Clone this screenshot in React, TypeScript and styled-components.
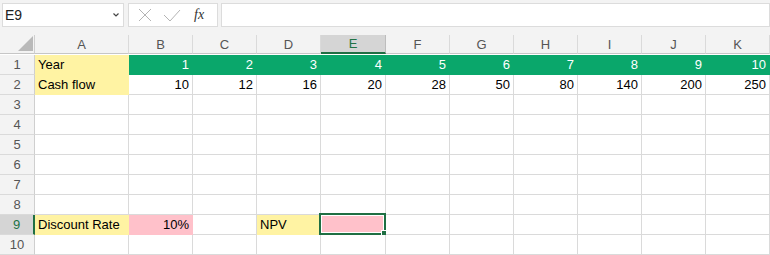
import styled, { createGlobalStyle } from 'styled-components'

const GRID = '#dadada'
const HEAD_BG = '#f3f3f3'
const SEL_GREEN = '#1f6f43'
const GREEN = '#0aa76b'
const YELLOW = '#fff3a3'
const PINK = '#ffc1ca'

const GlobalStyle = createGlobalStyle`
  body {
    margin: 0;
    background: #ffffff;
    font-family: 'Liberation Sans', Arial, sans-serif;
  }
`

const Toolbar = styled.div`
  display: flex;
  align-items: flex-start;
  gap: 3px;
  height: 35px;
  box-sizing: border-box;
  padding: 3px 0 0 2px;
  background: ${HEAD_BG};
`

const Box = styled.div<{ $w?: number }>`
  box-sizing: border-box;
  height: 24px;
  background: #fff;
  border: 1px solid #dcdcdc;
  display: flex;
  align-items: center;
  ${(p) => (p.$w ? `width: ${p.$w}px; flex: none;` : 'flex: 1;')}
`

const NameBox = styled(Box)`
  justify-content: space-between;
  padding: 0 3px 0 2px;
  font-size: 14px;
  color: #222;
`

const FnBox = styled(Box)`
  margin-left: 1px;
  padding-left: 9px;
  gap: 11px;
`

const Fx = styled.span`
  font-family: 'Liberation Serif', serif;
  font-style: italic;
  font-size: 14px;
  color: #333;
  margin-left: 2px;
`

const Sheet = styled.div`
  display: grid;
  grid-template-columns: 35px 94px 64px 64px 64px 65px 64px 64px 64px 64px 64px 64px;
  grid-auto-rows: 20px;
`

const Corner = styled.div`
  position: relative;
  box-sizing: border-box;
  height: 19px;
  background: ${HEAD_BG};
  border-right: 1px solid #cfcfcf;
  border-bottom: 1px solid #c6c6c6;
`

const ColHead = styled.div<{ $sel?: boolean }>`
  box-sizing: border-box;
  height: 19px;
  display: flex;
  align-items: center;
  justify-content: center;
  font-size: 13px;
  background: ${(p) => (p.$sel ? '#d5d5d5' : HEAD_BG)};
  color: ${(p) => (p.$sel ? '#217346' : '#555')};
  border-right: 1px solid ${(p) => (p.$sel ? '#bdbdbd' : GRID)};
  border-bottom: ${(p) => (p.$sel ? `2px solid ${SEL_GREEN}` : '1px solid #c6c6c6')};
`

const RowHead = styled.div<{ $sel?: boolean }>`
  box-sizing: border-box;
  display: flex;
  align-items: center;
  justify-content: center;
  font-size: 13px;
  line-height: 19px;
  background: ${(p) => (p.$sel ? '#d5d5d5' : HEAD_BG)};
  color: ${(p) => (p.$sel ? '#217346' : '#555')};
  border-right: ${(p) => (p.$sel ? `2px solid ${SEL_GREEN}` : '1px solid #cfcfcf')};
  border-bottom: 1px solid ${GRID};
`

const Cell = styled.div<{ $fill?: string; $right?: boolean; $ink?: string }>`
  position: relative;
  box-sizing: border-box;
  padding: 0 3px;
  font-size: 13px;
  line-height: 19px;
  white-space: nowrap;
  text-align: ${(p) => (p.$right ? 'right' : 'left')};
  color: ${(p) => p.$ink ?? '#000'};
  background: ${(p) => p.$fill ?? '#fff'};
  border-right: 1px solid ${(p) => p.$fill ?? GRID};
  border-bottom: 1px solid ${(p) => p.$fill ?? GRID};
`

const Selection = styled.div`
  position: absolute;
  top: -2px;
  left: -2px;
  right: -1px;
  bottom: -1px;
  border: 2px solid ${SEL_GREEN};
  box-shadow: inset 0 0 0 1px #fff;
  pointer-events: none;
`

const Handle = styled.div`
  position: absolute;
  right: -4px;
  bottom: -4px;
  width: 5px;
  height: 5px;
  background: ${SEL_GREEN};
  border: 1px solid #fff;
`

type CellData = { v?: string; fill?: string; right?: boolean; ink?: string; sel?: boolean }

const cols = ['A', 'B', 'C', 'D', 'E', 'F', 'G', 'H', 'I', 'J', 'K']
const years = [1, 2, 3, 4, 5, 6, 7, 8, 9, 10]
const flows = [10, 12, 16, 20, 28, 50, 80, 140, 200, 250]

const empty = (): CellData[] => cols.map(() => ({}))

const rows: CellData[][] = [
  [{ v: 'Year', fill: YELLOW }, ...years.map((y) => ({ v: String(y), fill: GREEN, right: true, ink: '#fff' }))],
  [{ v: 'Cash flow', fill: YELLOW }, ...flows.map((f) => ({ v: String(f), right: true }))],
  empty(),
  empty(),
  empty(),
  empty(),
  empty(),
  empty(),
  [
    { v: 'Discount Rate', fill: YELLOW },
    { v: '10%', fill: PINK, right: true },
    {},
    { v: 'NPV', fill: YELLOW },
    { fill: PINK, sel: true },
    {}, {}, {}, {}, {}, {},
  ],
  empty(),
]

export default function App() {
  return (
    <>
      <GlobalStyle />
      <Toolbar>
        <NameBox $w={122}>
          <span>E9</span>
          <svg width="8" height="6" viewBox="0 0 8 6">
            <polyline points="1.5,1.5 4,4 6.5,1.5" fill="none" stroke="#444" strokeWidth="1.2" />
          </svg>
        </NameBox>
        <FnBox $w={90}>
          <svg width="14" height="14" viewBox="0 0 14 14">
            <path d="M1 1 L13 13 M13 1 L1 13" stroke="#b4b4b4" strokeWidth="1" fill="none" />
          </svg>
          <svg width="18" height="13" viewBox="0 0 18 13">
            <path d="M1 6 L7 12 L17 1" stroke="#b4b4b4" strokeWidth="1" fill="none" />
          </svg>
          <Fx>fx</Fx>
        </FnBox>
        <Box />
      </Toolbar>
      <Sheet>
        <Corner>
          <svg width="15" height="15" viewBox="0 0 15 15" style={{ position: 'absolute', right: 1, bottom: 2 }}>
            <polygon points="15,0 15,15 0,15" fill="#b9b9b9" />
          </svg>
        </Corner>
        {cols.map((c) => (
          <ColHead key={c} $sel={c === 'E'}>
            {c}
          </ColHead>
        ))}
        {rows.map((r, i) => [
          <RowHead key={`h${i}`} $sel={i === 8}>
            {i + 1}
          </RowHead>,
          ...r.map((c, j) => (
            <Cell key={`${i}-${j}`} $fill={c.fill} $right={c.right} $ink={c.ink}>
              {c.v}
              {c.sel && (
                <Selection>
                  <Handle />
                </Selection>
              )}
            </Cell>
          )),
        ])}
      </Sheet>
    </>
  )
}
